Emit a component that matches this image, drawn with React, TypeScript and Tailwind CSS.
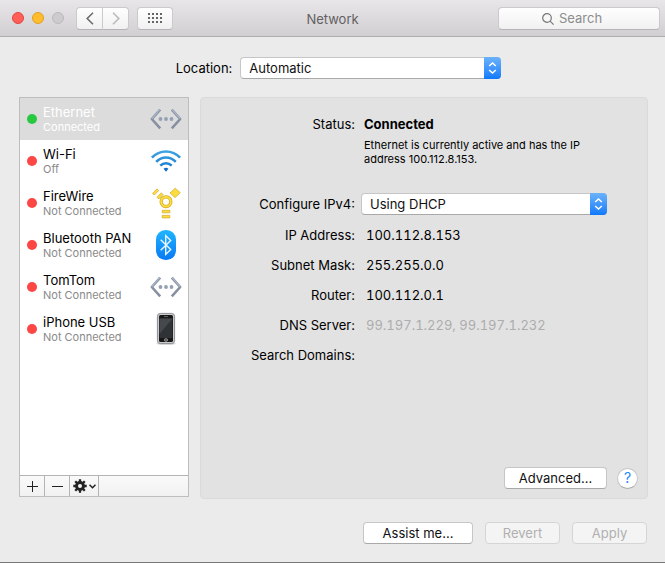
import React from "react";

function EthernetIcon() {
  return (
    <svg width="32" height="22" viewBox="0 0 32 22" fill="none" aria-hidden="true">
      <path d="M10.2 1.6 1.8 11l8.400 9.400M21.800 1.600 30.200 11l-8.400 9.400" stroke="#8790a1" strokeWidth="2.600" strokeLinejoin="round" />
      <path d="M9.900 1.600 1.800 10.600M22.100 1.600l8.100 9" stroke="#adb8ca" strokeWidth="1.200" />
      <circle cx="10.500" cy="11" r="1.900" fill="#949fb2" />
      <circle cx="16" cy="11" r="1.900" fill="#949fb2" />
      <circle cx="21.500" cy="11" r="1.900" fill="#949fb2" />
    </svg>
  );
}

function WifiIcon() {
  return (
    <svg width="32" height="24" viewBox="0 0 32 24" fill="none" aria-hidden="true">
      <defs>
        <linearGradient id="wifi" x1="0" y1="0" x2="0" y2="24" gradientUnits="userSpaceOnUse">
          <stop stopColor="#44a9e6" />
          <stop offset="1" stopColor="#0b6fc9" />
        </linearGradient>
      </defs>
      <g stroke="url(#wifi)" strokeWidth="2.500">
        <path d="M1.900 8.700C9.600.300 22.400.300 30.100 8.700" />
        <path d="M6.200 12.800c5.400-5.800 14.200-5.800 19.600 0" />
        <path d="M10.300 16.700c3.200-3.300 8.200-3.300 11.400 0" />
      </g>
      <path d="M13.600 19.700c1.400-1.200 3.400-1.200 4.800 0L16 22.800z" fill="#0b6fc9" />
    </svg>
  );
}

function FireWireIcon() {
  return (
    <svg width="32" height="32" viewBox="0 0 32 32" fill="none" aria-hidden="true">
      <circle cx="16" cy="14.700" r="4.800" stroke="#d5a91d" strokeWidth="3.400" />
      <circle cx="16" cy="14.700" r="4.800" stroke="#fbdc43" strokeWidth="2" />
      <g fill="#fbdc43" stroke="#d5a91d" strokeWidth="0.700">
        <path d="m20 6 5.200-4.800L30.300 5.700 25 10.600z" />
        <path d="m2.600 6.400 4.400-4.500 1.700 1.700-4.400 4.500zM7 10.200l4.300-4.400 1.800 1.800-4.300 4.400z" />
        <path d="M12.200 23.300h7.600v2.500h-7.600zM12.200 28.400h7.600v2.500h-7.600z" />
      </g>
    </svg>
  );
}

function BluetoothIcon() {
  return (
    <svg width="32" height="32" viewBox="0 0 32 32" fill="none" aria-hidden="true">
      <defs>
        <linearGradient id="bt" x1="0" y1="1" x2="0" y2="31" gradientUnits="userSpaceOnUse">
          <stop stopColor="#20b5ff" />
          <stop offset="1" stopColor="#0879f5" />
        </linearGradient>
      </defs>
      <rect x="6" y="1" width="20" height="30" rx="9.500" fill="url(#bt)" />
      <path d="m10.700 10.800 10 9.800-5 4.800V6.600l5 4.800-10 9.800" stroke="#e9f6ff" strokeWidth="1.400" />
    </svg>
  );
}

function PhoneIcon() {
  return (
    <svg width="32" height="34" viewBox="0 0 32 34" fill="none" aria-hidden="true">
      <ellipse cx="16" cy="31.600" rx="10" ry="1.500" fill="#ddd" />
      <rect x="7.400" y="1.400" width="17.200" height="30.200" rx="3" fill="#c9cbcf" stroke="#77797d" strokeWidth="0.800" />
      <rect x="9" y="3" width="14" height="27" rx="1.600" fill="#171717" />
      <rect x="9.500" y="6.500" width="13" height="19.500" fill="#303336" />
      <path d="M9.500 6.500h13L9.500 22z" fill="#45494d" />
      <path d="M14 4.600h4" stroke="#777" strokeWidth="0.800" />
      <rect x="14.700" y="26.900" width="2.600" height="2.200" rx="0.600" stroke="#ddd" strokeWidth="0.800" />
    </svg>
  );
}

function GearIcon() {
  return (
    <svg width="14" height="14" viewBox="0 0 14 14" fill="none" stroke="#222" aria-hidden="true">
      <circle cx="7" cy="7" r="3.500" strokeWidth="3" />
      <path
        d="M7 .300v2.400M7 11.300v2.400M.300 7h2.400M11.300 7h2.400M2.200 2.200 4 4M10 10l1.800 1.800M11.800 2.200 10 4M4 10l-1.800 1.800"
        strokeWidth="2.300"
      />
    </svg>
  );
}

const services = [
  { name: "Ethernet", state: "Connected", on: true, Icon: EthernetIcon },
  { name: "Wi-Fi", state: "Off", on: false, Icon: WifiIcon },
  { name: "FireWire", state: "Not Connected", on: false, Icon: FireWireIcon },
  { name: "Bluetooth PAN", state: "Not Connected", on: false, Icon: BluetoothIcon },
  { name: "TomTom", state: "Not Connected", on: false, Icon: EthernetIcon },
  { name: "iPhone USB", state: "Not Connected", on: false, Icon: PhoneIcon },
];

const details = [
  { label: "IP Address:", value: "100.112.8.153", dim: false },
  { label: "Subnet Mask:", value: "255.255.0.0", dim: false },
  { label: "Router:", value: "100.112.0.1", dim: false },
  { label: "DNS Server:", value: "99.197.1.229, 99.197.1.232", dim: true },
  { label: "Search Domains:", value: "", dim: false },
];

function PopUp({ id, value, width }: { id: string; value: string; width: string }) {
  return (
    <div className={"relative h-[22px] " + width}>
      <select
        id={id}
        className="h-full w-full appearance-none rounded-[4px] border border-[#c6c6c6] border-b-[#a9a9a9] bg-white pl-2 pr-6 text-[13px] leading-5 text-[#111]"
      >
        <option>{value}</option>
      </select>
      <span className="pointer-events-none absolute inset-y-0 right-0 flex w-[17px] items-center justify-center rounded-r-[4px] bg-linear-to-b from-[#6bb3fa] to-[#0a79fb]">
        <svg width="9" height="12" viewBox="0 0 9 12" fill="none" stroke="#fff" strokeWidth="1.500" aria-hidden="true">
          <path d="m1.200 4 3.300-3 3.300 3M1.200 8l3.300 3 3.300-3" />
        </svg>
      </span>
    </div>
  );
}

function PushButton({ children, width, disabled }: { children: React.ReactNode; width: string; disabled?: boolean }) {
  const tone = disabled
    ? "border-[#d5d5d5] bg-[#f4f4f4] text-[#b0b0b0]"
    : "border-[#c6c6c6] border-b-[#a9a9a9] bg-white text-[#111]";
  return (
    <button disabled={disabled} className={"h-[22px] rounded-[4px] border text-[13px] leading-5 " + width + " " + tone}>
      {children}
    </button>
  );
}

export default function App() {
  const toolButton =
    "flex h-[23px] items-center justify-center border border-[#cbc9cb] border-b-[#b5b3b5] bg-linear-to-b from-[#fefefe] to-[#f1f1f1]";
  const listButton = "flex items-center justify-center border-r border-[#b4b4b4]";
  return (
    <div className="flex min-h-screen flex-col border-b border-[#777] bg-[#ebebeb] font-['Inter','Liberation_Sans',sans-serif] text-[13px] leading-4 text-black">
      <header className="flex h-[37px] items-center border-b border-[#aeacae] bg-linear-to-b from-[#e8e6e8] to-[#d1cfd1] px-[5px]">
        <div className="flex flex-1 items-center">
          <div className="flex gap-2 pl-[7px]">
            <button aria-label="Close" className="size-3 rounded-full border border-[#e2463f] bg-[#ff5f57]" />
            <button aria-label="Minimize" className="size-3 rounded-full border border-[#dfa023] bg-[#ffbd2e]" />
            <button aria-label="Zoom" disabled className="size-3 rounded-full border border-[#bababa] bg-[#cdcccd]" />
          </div>
          <div className="ml-3 flex">
            <button aria-label="Back" className={toolButton + " w-[27px] rounded-l-[4px]"}>
              <svg width="8" height="13" viewBox="0 0 8 13" fill="none" stroke="#6c6c6c" strokeWidth="1.600" aria-hidden="true">
                <path d="M7 .800 1.200 6.500 7 12.200" />
              </svg>
            </button>
            <button aria-label="Forward" disabled className={toolButton + " w-[26px] rounded-r-[4px] border-l-0"}>
              <svg width="8" height="13" viewBox="0 0 8 13" fill="none" stroke="#bababa" strokeWidth="1.600" aria-hidden="true">
                <path d="m1 .800 5.800 5.700L1 12.200" />
              </svg>
            </button>
          </div>
          <button aria-label="Show All" className={toolButton + " ml-2 w-9 rounded-[4px]"}>
            <svg width="14" height="10" viewBox="0 0 14 10" fill="#666" aria-hidden="true">
              {[0, 4, 8].map((y) => [0, 4, 8, 12].map((x) => <rect key={x + "-" + y} x={x} y={y} width="2" height="2" />))}
            </svg>
          </button>
        </div>
        <h1 className="pt-0.5 text-[13px] leading-4 text-[#626062]">Network</h1>
        <div className="flex flex-1 justify-end">
          <div className="relative">
            <input
              type="search"
              aria-label="Search"
              placeholder="Search"
              className="h-[23px] w-[162px] appearance-none rounded-[4px] border border-[#cbc9cb] border-b-[#b5b3b5] bg-linear-to-b from-[#fefefe] to-[#f1f1f1] pl-[60px] pr-2 text-[13px] leading-5 placeholder:text-[#8c8c8c]"
            />
            <svg className="pointer-events-none absolute left-11 top-1.5" width="12" height="12" viewBox="0 0 12 12" fill="none" stroke="#777" strokeWidth="1.200" aria-hidden="true">
              <circle cx="5" cy="5" r="4.300" />
              <path d="m8.100 8.100 3.500 3.500" />
            </svg>
          </div>
        </div>
      </header>

      <div className="flex items-center justify-center gap-2 pb-[18px] pl-3 pt-5">
        <label htmlFor="location" className="whitespace-nowrap text-right">
          Location:
        </label>
        <PopUp id="location" value="Automatic" width="w-[261px]" />
      </div>

      <main className="flex flex-1 gap-[11px] pl-[19px] pr-[17px]">
        <aside className="mb-0.5 flex w-[170px] shrink-0 flex-col border border-[#bebebe] bg-white">
          <ul className="flex-1">
            {services.map(({ name, state, on, Icon }) => (
              <li key={name} className={on ? "bg-[#dcdcdc] text-white" : "bg-white text-black"}>
                <button className="flex h-[42px] w-full items-center pl-[7px] pr-1.5 text-left">
                  <span className={"size-2.5 shrink-0 rounded-full " + (on ? "bg-[#28c840]" : "bg-[#fc4744]")} />
                  <span className="ml-1.5 flex flex-1 flex-col whitespace-nowrap">
                    <span className="text-[13px] leading-4">{name}</span>
                    <span className={"text-[11px] leading-[14px] " + (on ? "text-white" : "text-[#8a8a8a]")}>{state}</span>
                  </span>
                  <span className="flex w-8 shrink-0 justify-center">
                    <Icon />
                  </span>
                </button>
              </li>
            ))}
          </ul>
          <div className="flex h-[21px] border-t border-[#b4b4b4] bg-linear-to-b from-[#fafafa] to-[#f1f1f1]">
            <button aria-label="Add service" className={listButton + " w-[25px]"}>
              <svg width="11" height="11" viewBox="0 0 11 11" stroke="#222" aria-hidden="true">
                <path d="M5.500 0v11M0 5.500h11" />
              </svg>
            </button>
            <button aria-label="Remove service" className={listButton + " w-[25px]"}>
              <svg width="11" height="11" viewBox="0 0 11 11" stroke="#222" aria-hidden="true">
                <path d="M0 5.500h11" />
              </svg>
            </button>
            <button aria-label="Service actions" className={listButton + " w-[29px] gap-0.5"}>
              <GearIcon />
              <svg width="7" height="5" viewBox="0 0 7 5" fill="none" stroke="#222" strokeWidth="1.500" aria-hidden="true">
                <path d="m.500.800 3 3 3-3" />
              </svg>
            </button>
          </div>
        </aside>

        <section className="flex flex-1 flex-col rounded-[4px] border border-[#dadada] bg-[#e2e2e2] pb-[9px] pt-[18px]">
          <div className="grid grid-cols-[154px_1fr]">
            <span className="text-right">Status:</span>
            <div className="pl-[9px]">
              <p className="font-bold">Connected</p>
              <p className="max-w-[230px] pt-1.5 text-[11px] leading-[14px]">
                Ethernet is currently active and has the IP address 100.112.8.153.
              </p>
            </div>
          </div>
          <div className="mt-[27px] grid grid-cols-[154px_1fr] items-center">
            <label htmlFor="ipv4" className="text-right">
              Configure IPv4:
            </label>
            <div className="pl-1.5">
              <PopUp id="ipv4" value="Using DHCP" width="w-[246px]" />
            </div>
          </div>
          <dl className="mt-[5px]">
            {details.map((d) => (
              <div key={d.label} className="grid h-[30px] grid-cols-[154px_1fr] items-center">
                <dt className="text-right">{d.label}</dt>
                <dd className={"pl-[11px] tabular-nums " + (d.dim ? "text-[#adadad]" : "text-black")}>{d.value}</dd>
              </div>
            ))}
          </dl>
          <div className="mt-auto flex items-center justify-end gap-2.5 pr-[9px]">
            <PushButton width="w-[103px]">Advanced...</PushButton>
            <button
              aria-label="Help"
              className="size-[21px] rounded-full border border-[#c6c6c6] border-b-[#a9a9a9] bg-white text-[14px] leading-[18px] text-[#1a86fb]"
            >
              ?
            </button>
          </div>
        </section>
      </main>

      <footer className="flex justify-end gap-3 pb-[18px] pr-[18px] pt-[23px]">
        <PushButton width="w-[110px]">Assist me...</PushButton>
        <PushButton width="w-[75px]" disabled>
          Revert
        </PushButton>
        <PushButton width="w-[75px]" disabled>
          Apply
        </PushButton>
      </footer>
    </div>
  );
}
